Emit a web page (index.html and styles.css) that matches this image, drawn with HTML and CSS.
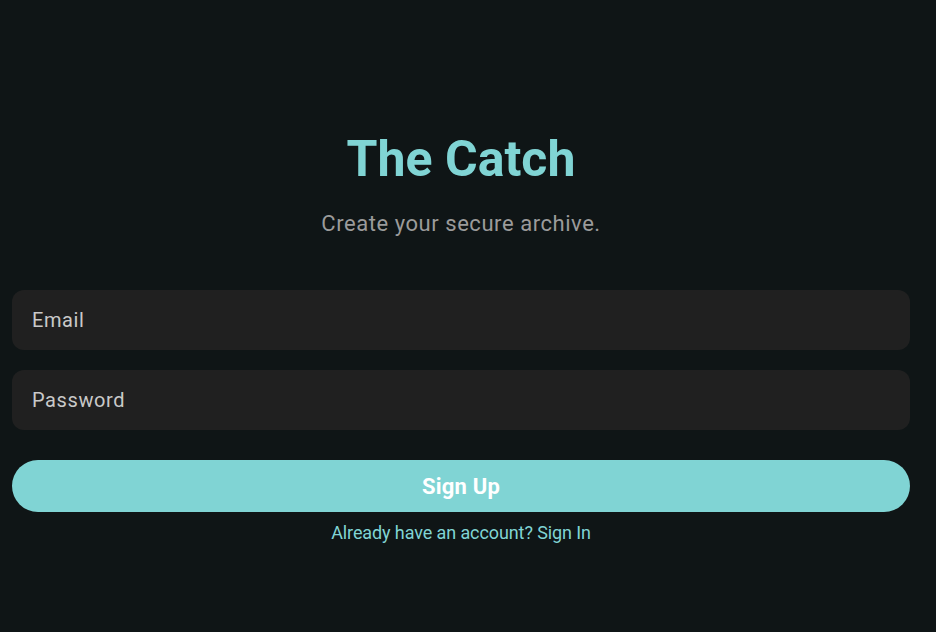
FILE: index.html
```html
<!DOCTYPE html>
<html lang="en">
<head>
    <meta charset="UTF-8">
    <meta name="viewport" content="width=device-width, initial-scale=1.0">
    <title>The Catch - Sign Up</title>
    <link rel="stylesheet" href="styles.css">
</head>
<body>
    <div class="page">
        <h1 class="title">The Catch</h1>
        <p class="subtitle">Create your secure archive.</p>
        <!-- signup form -->
        <form class="form" onsubmit="return false;">
            <input class="field" type="email" placeholder="Email">
            <input class="field" type="password" placeholder="Password">
            <button class="btn" type="submit">Sign Up</button>
        </form>
        <a class="switch" href="#">Already have an account? Sign In</a>
    </div>
</body>
</html>
```

FILE: styles.css
```css
/* page base */
body {
    margin: 0;
    background-color: #0f1516;
    font-family: Roboto, "Liberation Sans", sans-serif;
}
.page {
    width: 898px;
    margin-left: 12px;
    padding-top: 129px;
    display: flex;
    flex-direction: column;
    align-items: center;
}
.title {
    margin: 0;
    font-size: 50px;
    font-weight: 700;
    line-height: 60px;
    color: #80d4d4;
}
.subtitle {
    margin: 20px 0 0;
    font-size: 22px;
    line-height: 30px;
    color: #9b9b9b;
    letter-spacing: 0.55px;
}
/* form */
.form {
    width: 100%;
    margin-top: 51px;
    display: flex;
    flex-direction: column;
    gap: 20px;
}
.field {
    box-sizing: border-box;
    height: 60px;
    padding: 0 20px;
    border: none;
    border-radius: 12px;
    background-color: #202020;
    color: #e0e0e0;
    font-family: inherit;
    font-size: 20px;
    letter-spacing: 0.6px;
    outline: none;
}
.field::placeholder { color: #c9c9c9; }
.btn {
    height: 52px;
    margin-top: 10px;
    border: none;
    border-radius: 26px;
    background-color: #80d4d4;
    color: #ffffff;
    font-family: inherit;
    font-size: 22px;
    font-weight: 700;
    letter-spacing: 0.2px;
    cursor: pointer;
}
.switch {
    margin-top: 9px;
    font-size: 18px;
    line-height: 24px;
    color: #80d4d4;
    letter-spacing: -0.1px;
    text-decoration: none;
}
```
